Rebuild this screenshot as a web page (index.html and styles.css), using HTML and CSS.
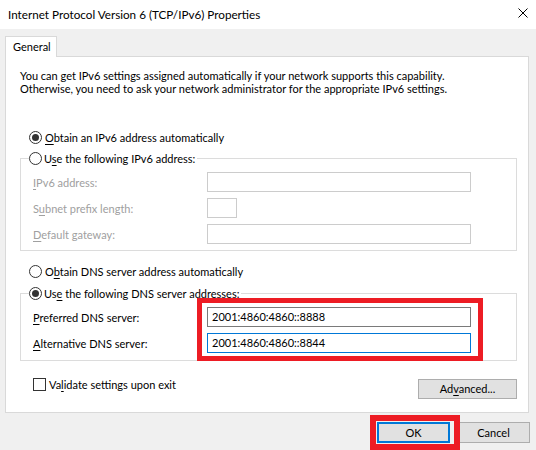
FILE: index.html
```html
<!DOCTYPE html>
<html>
<head>
<meta charset="utf-8">
<link rel="stylesheet" href="styles.css">
</head>
<body>
<div class="window">
  <div class="titlebar">
    <span class="title">Internet Protocol Version 6 (TCP/IPv6) Properties</span>
    <svg class="close" width="10" height="10" viewBox="0 0 10 10"><path d="M0.5 0.5 L9.5 9.5 M9.5 0.5 L0.5 9.5" stroke="#000" stroke-width="1" fill="none"/></svg>
  </div>
  <div class="body">
    <div class="tabs"><div class="tab">General</div></div>
    <div class="panel">
      <p class="intro">You can get IPv6 settings assigned automatically if your network supports this capability.<br>Otherwise, you need to ask your network administrator for the appropriate IPv6 settings.</p>

      <div class="radio-row first"><span class="radio checked"></span><span><u>O</u>btain an IPv6 address automatically</span></div>

      <fieldset class="group">
        <legend><span class="radio"></span><span>U<u>s</u>e the following IPv6 address:</span></legend>
        <div class="field"><span class="lbl disabled"><u>I</u>Pv6 address:</span><span class="input wide off"></span></div>
        <div class="field"><span class="lbl disabled">S<u>u</u>bnet prefix length:</span><span class="input small off"></span></div>
        <div class="field"><span class="lbl disabled"><u>D</u>efault gateway:</span><span class="input wide off"></span></div>
      </fieldset>

      <div class="radio-row dns"><span class="radio"></span><span>O<u>b</u>tain DNS server address automatically</span></div>

      <fieldset class="group second">
        <legend><span class="radio checked"></span><span>Us<u>e</u> the following DNS server addresses:</span></legend>
        <div class="dns-rows">
          <div class="field"><span class="lbl"><u>P</u>referred DNS server:</span><span class="input wide on">2001:4860:4860::8888</span></div>
          <div class="field"><span class="lbl"><u>A</u>lternative DNS server:</span><span class="input wide focus">2001:4860:4860::8844</span></div>
          <div class="mark mark-dns"></div>
        </div>
      </fieldset>

      <div class="bottom-row">
        <div class="check-row"><span class="checkbox"></span><span>Va<u>l</u>idate settings upon exit</span></div>
        <button class="btn advanced">Ad<u>v</u>anced...</button>
      </div>
    </div>
    <div class="footer">
      <div class="ok-wrap">
        <button class="btn ok">OK</button>
        <div class="mark mark-ok"></div>
      </div>
      <button class="btn cancel">Cancel</button>
    </div>
  </div>
</div>
</body>
</html>
```

FILE: styles.css
```css
* { box-sizing: border-box; }
html, body {
  margin: 0;
  padding: 0;
  width: 536px;
  height: 450px;
  overflow: hidden;
  background: #f0f0f0;
  font-family: Lato, "Noto Sans", sans-serif;
  font-size: 11px;
  color: #000;
}
u { text-decoration: underline; text-underline-offset: 2px; text-decoration-thickness: 1px; }

.titlebar {
  height: 29px;
  background: #fff;
  display: flex;
  align-items: center;
  justify-content: space-between;
  padding: 0 8px;
}
.title { font-size: 11.7px; line-height: 16px; margin-top: -1px; white-space: nowrap; }
.close { display: block; margin-top: -3px; }

.body { padding: 7px 0 0 5px; }

.tabs { height: 20px; display: flex; }
.tab {
  position: relative;
  z-index: 1;
  width: 52px;
  height: 21px;
  background: #fff;
  border: 1px solid #d9d9d9;
  border-bottom: none;
  padding: 2px 0 0 7px;
  line-height: 16px;
}

.panel {
  width: 524px;
  height: 357px;
  background: #fff;
  border: 1px solid #d9d9d9;
  padding: 12px 11px 0 14px;
}

.intro { margin: 0; line-height: 13px; white-space: nowrap; }

.radio-row {
  display: flex;
  align-items: center;
  gap: 3px;
  height: 16px;
  margin-left: 9px;
  white-space: nowrap;
}
.radio-row.first { margin-top: 34px; }
.radio-row.dns { margin-top: 12px; }

.radio {
  width: 13px;
  height: 13px;
  border: 1px solid #333;
  border-radius: 50%;
  background: #fff;
  display: inline-flex;
  align-items: center;
  justify-content: center;
  flex: none;
}
.radio.checked::after {
  content: "";
  width: 7px;
  height: 7px;
  border-radius: 50%;
  background: #333;
}

.group {
  margin: 5px 0 0 0;
  border: 1px solid #dcdcdc;
  padding: 6px 12px 6px 12px;
  min-width: 0;
}
.group.second { margin-top: 6px; padding-bottom: 7px; }
.group legend {
  display: flex;
  align-items: center;
  gap: 2px;
  height: 16px;
  padding: 0 2px 0 0;
  margin-left: -4px;
  white-space: nowrap;
}

.field {
  display: flex;
  align-items: center;
  height: 20px;
}
.field + .field { margin-top: 6px; }
.lbl { width: 174px; flex: none; white-space: nowrap; }
.disabled { color: #a0a0a0; }

.input {
  height: 20px;
  border: 1px solid #ccc;
  background: #fff;
  display: flex;
  align-items: center;
  padding-left: 4px;
  line-height: 16px;
}
.input.wide { width: 264px; }
.input.small { width: 30px; }
.input.on { border-color: #7a7a7a; }
.input.focus { border-color: #0078d7; }

.dns-rows { position: relative; }
.mark {
  position: absolute;
  border: 5px solid #ed1c24;
  pointer-events: none;
}
.mark-dns { left: 164px; top: -9px; width: 286px; height: 63px; }

.bottom-row {
  display: flex;
  justify-content: space-between;
  align-items: flex-start;
  margin-top: 17px;
}
.check-row {
  display: flex;
  align-items: center;
  gap: 3px;
  height: 13px;
  margin-left: 13px;
  white-space: nowrap;
}
.checkbox {
  width: 13px;
  height: 13px;
  border: 1px solid #333;
  background: #fff;
  flex: none;
}

.btn {
  font-family: inherit;
  font-size: 11px;
  color: #000;
  background: #e1e1e1;
  border: 1px solid #adadad;
  padding: 0;
  margin: 0;
  line-height: 16px;
}
.advanced { width: 99px; height: 20px; margin-top: 1px; }

.footer {
  display: flex;
  justify-content: flex-end;
  gap: 7px;
  padding-right: 6px;
  margin-top: 9px;
}
.ok-wrap { position: relative; }
.ok, .cancel { width: 73px; height: 21px; display: block; }
.ok { border: 2px solid #0078d7; }
.mark-ok { border-width: 6px; left: -7px; top: -7px; right: -10px; bottom: -7px; }
```
